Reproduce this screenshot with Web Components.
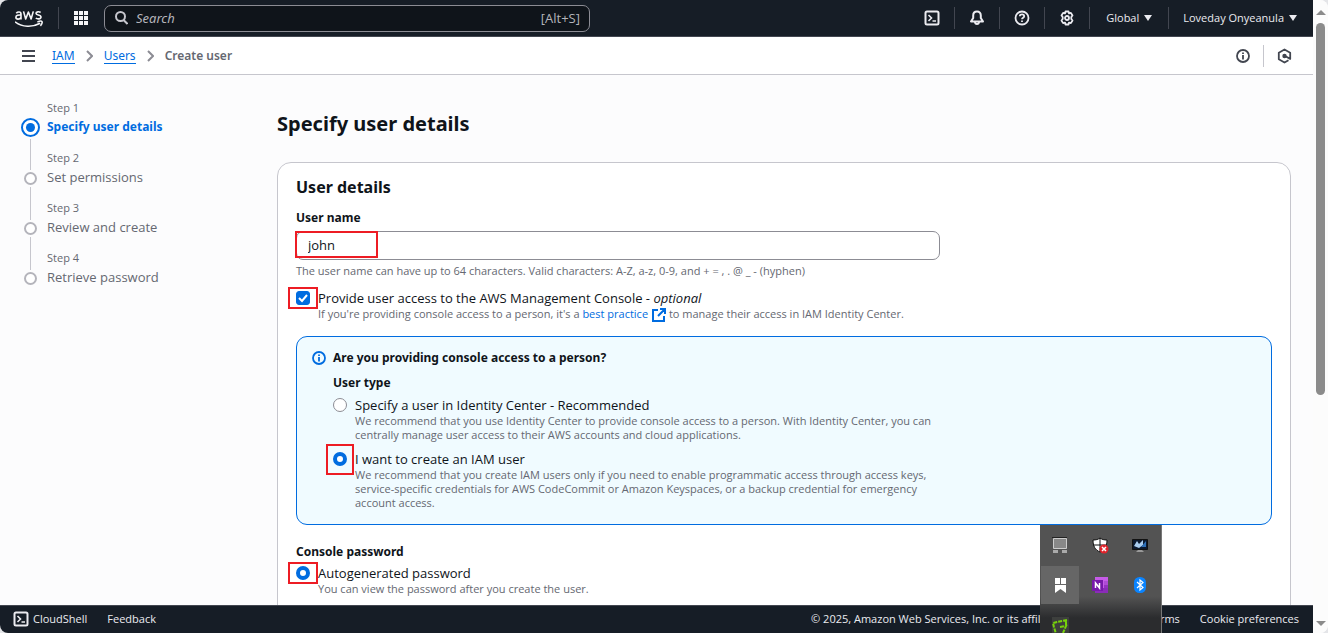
<!DOCTYPE html>
<html lang="en">
<head>
<meta charset="utf-8">
<title>Create user | IAM</title>
<meta name="viewport" content="width=device-width, initial-scale=1">
<style>
html, body { margin: 0; height: 100%; }
body {
  --dark: #161d26; --blue: #006ce0; --ink: #0f141a; --muted: #656871; --line: #c6c6cd;
  --s: 11px; --m: 12px; --b: 13px; --bold: "Noto Sans", sans-serif;
  background: #e4e5e8; color: var(--ink); overflow: hidden;
  font-family: "Open Sans", "Noto Sans", sans-serif; font-size: 13px; line-height: 18px;
}
</style>
</head>
<body>
<console-window>
  <top-bar slot="top"></top-bar>
  <crumb-bar slot="top"></crumb-bar>
  <step-nav slot="side">
    <step-item step="Step 1" active>Specify user details</step-item>
    <step-item step="Step 2">Set permissions</step-item>
    <step-item step="Step 3">Review and create</step-item>
    <step-item step="Step 4" last>Retrieve password</step-item>
  </step-nav>
  <user-form></user-form>
  <foot-bar slot="foot"></foot-bar>
  <tray-popup slot="over"></tray-popup>
</console-window>

<script>
const define = (name, html, init) => customElements.define(name, class extends HTMLElement {
  constructor() {
    super();
    const t = document.createElement('template');
    t.innerHTML = '<style>*,:host{box-sizing:border-box}svg{display:block;flex:none}' + html.replace('<style>', '');
    this.attachShadow({ mode: 'open' }).append(t.content.cloneNode(true));
  }
  connectedCallback() { if (init) init(this, this.shadowRoot); }
});
const terminal = '<svg width="16" height="16" viewBox="0 0 16 16" fill="none" stroke="currentColor" stroke-width="2"><rect x="1.5" y="1.5" width="13" height="13" rx="1.5"/><path d="M4.5 5l3 3-3 3M8.5 11h3.5" stroke-width="1.6"/></svg>';

define('console-window', `<style>
:host{display:flex;height:100vh;position:relative;overflow:hidden;border-radius:8px;background:#fcfcfc}
.app{flex:1;min-width:0;display:flex;flex-direction:column;background:#fcfcfd}
main{flex:1;min-height:0;overflow:hidden;display:grid;grid-template-columns:256px 1fr;padding:26px 22px 0 21px}
</style>
<div class="app"><slot name="top"></slot><main><slot name="side"></slot><slot></slot></main><slot name="foot"></slot></div>
<scroll-rail></scroll-rail><slot name="over"></slot>`);

define('scroll-rail', `<style>
:host{display:flex;flex-direction:column;align-items:center;width:15px;padding:10px 0 7px;gap:8px;background:#fcfcfc}
.track{flex:1;width:9px}
.thumb{height:63%;border-radius:5px;background:#8b8b8b}
</style>
<svg width="10" height="5"><path d="M5 0l5 5H0z" fill="#8b8b8b"/></svg>
<div class="track"><div class="thumb"></div></div>
<svg width="10" height="5"><path d="M0 0h10L5 5z" fill="#8b8b8b"/></svg>`);

define('top-bar', `<style>
:host{display:flex;align-items:center;height:37px;flex:none;background:var(--dark);border-bottom:1px solid #424650;color:#ebebf0;padding:0 16px 0 15px;font-size:11px}
.sep{width:1px;height:22px;background:#424650}
button{background:none;border:0;padding:0;color:inherit;font:inherit;display:flex;align-items:center;justify-content:center;gap:5px}
.grid{width:14px;margin:0 16px 0 15px}
.home{margin-right:15px;color:inherit}
.search{width:486px;height:27px;display:flex;align-items:center;gap:8px;padding:0 9px 0 10px;border:1px solid #8c8c94;border-radius:7px;background:#0f141a;color:#b4b4bb;font-size:13px}
input{flex:1;min-width:0;border:0;padding:0;background:none;outline:0;font:italic 13px "Noto Sans",sans-serif;color:inherit}
input::placeholder{color:#b4b4bb;opacity:1}
.tools{margin-left:auto;display:flex;align-items:center}
.icon{width:44px}
.global{width:78px}.user{margin-left:14px}
</style>
<a class="home" href="#" aria-label="AWS home"><svg width="28" height="19" viewBox="0 0 28 19" fill="none" stroke="#f5f5f7" stroke-width="1.6" stroke-linejoin="round">
<path d="M1.3 4.2C2.6 2.6 6 2.4 6 5v5.4M6 6.2C3.4 5.8.9 6.3.9 8.3c0 2.4 4 2.4 5.1 0M8.5 2.4l2.2 7.6L13.4 3l2.7 7 2.2-7.6M25.6 3.5c-1.3-1-4.6-1-4.6.8 0 2.2 5 1 5 3.7 0 2.4-3.8 2.3-5.2 1"/>
<path d="M0 12.8c7 5.6 17.500 5.800 25.200 1.500M22.400 12.900c2-.9 4.200-.9 4.600-.2.300.7-.2 2.600-1.600 4.200"/></svg></a>
<i class="sep"></i>
<button class="grid" aria-label="Services"><svg width="14" height="14" fill="#f5f5f7"><path d="M0 0h4v4H0zM5 0h4v4H5zM10 0h4v4h-4zM0 5h4v4H0zM5 5h4v4H5zM10 5h4v4h-4zM0 10h4v4H0zM5 10h4v4H5zM10 10h4v4h-4z"/></svg></button>
<label class="search"><svg width="13" height="14" viewBox="0 0 13 14" fill="none" stroke="#c6c6cd" stroke-width="2"><circle cx="5.500" cy="5.500" r="4.500"/><path d="M8.500 9l4 4"/></svg><input type="search" aria-label="Search" placeholder="Search"><span>[Alt+S]</span></label>
<div class="tools">
<button class="icon" aria-label="CloudShell">${terminal}</button><i class="sep"></i>
<button class="icon" aria-label="Notifications"><svg width="16" height="16" viewBox="0 0 16 16" fill="none" stroke="currentColor" stroke-width="2"><path d="M8 1.500C5.500 1.500 4.200 3.200 4.200 5.500V8L2 11.500h12L11.800 8V5.500C11.800 3.200 10.500 1.500 8 1.500z" stroke-linejoin="round"/><path d="M6 12c.2 2.600 3.800 2.600 4 0"/></svg></button><i class="sep"></i>
<button class="icon" aria-label="Help"><svg width="16" height="16" viewBox="0 0 16 16" fill="none" stroke="currentColor" stroke-width="1.800"><circle cx="8" cy="8" r="6.500"/><path d="M5.800 6.300c0-2.700 4.400-2.700 4.400 0 0 1.500-2.200 1.500-2.200 3M8 10.500v1.600"/></svg></button><i class="sep"></i>
<button class="icon" aria-label="Settings"><svg width="16" height="16" viewBox="0 0 16 16" fill="none" stroke="currentColor" stroke-width="1.800"><path d="M6.500 1.500h3l.5 1.900 1.900-.5 1.600 2.600L12.300 7v2l1.200 1.500-1.600 2.600-1.900-.5-.5 1.900h-3L6 12.600l-1.900.5-1.600-2.600L3.700 9V7L2.500 5.500l1.600-2.600 1.900.5z" stroke-linejoin="round"/><circle cx="8" cy="8" r="2"/></svg></button><i class="sep"></i>
<button class="global">Global<svg width="8" height="6"><path d="M0 0h8L4 6z" fill="#ebebf0"/></svg></button><i class="sep"></i>
<button class="user">Loveday Onyeanula<svg width="8" height="6"><path d="M0 0h8L4 6z" fill="#ebebf0"/></svg></button>
</div>`);

define('crumb-bar', `<style>
:host{display:flex;align-items:center;height:38px;flex:none;background:#fff;border-bottom:1px solid var(--line);padding:0 21px 0 22px;color:#424650;font-size:var(--m)}
nav{display:flex;align-items:center;gap:11px;margin-left:17px;font-family:var(--bold)}
a{color:var(--blue);text-decoration:none;border-bottom:1px solid var(--blue);line-height:15px}
b{color:#656871;font-weight:600}
button{background:none;border:0;padding:0;color:inherit;display:flex}
.right{margin-left:auto;display:flex;align-items:center;gap:13px}
.right i{width:1px;height:22px;background:var(--line)}
</style>
<button aria-label="Open navigation"><svg width="13" height="12" fill="currentColor"><path d="M0 0h13v2H0zM0 5h13v2H0zM0 10h13v2H0z"/></svg></button>
<nav aria-label="Breadcrumbs"><a href="#">IAM</a><svg width="7" height="12" fill="none" stroke="#8c8c94" stroke-width="2"><path d="M1 1l5 5-5 5"/></svg><a href="#">Users</a><svg width="7" height="12" fill="none" stroke="#8c8c94" stroke-width="2"><path d="M1 1l5 5-5 5"/></svg><b>Create user</b></nav>
<div class="right"><button aria-label="Information"><svg width="14" height="14" fill="none" stroke="currentColor" stroke-width="1.800"><circle cx="7" cy="7" r="6"/><path d="M7 6v4.500M7 3.500v1.600"/></svg></button><i></i>
<button aria-label="Assistant"><svg width="15" height="16" viewBox="0 0 15 16" fill="none" stroke="currentColor" stroke-width="1.800"><path d="M11.500 12.300L7.500 14.500 1.800 11.300V4.700L7.500 1.500l5.700 3.200v6.200L8 8" stroke-linejoin="round"/><circle cx="7.500" cy="8" r="1.300" fill="currentColor"/></svg></button></div>`);

define('step-nav', `<style>:host{display:block}ol{margin:0;padding:0;list-style:none}</style><ol><slot></slot></ol>`);

define('step-item', `<style>
:host{display:grid;grid-template-columns:19px 1fr;column-gap:7px;height:50px;color:var(--muted)}
.mark{display:flex;flex-direction:column;align-items:center;padding-top:21px}
.dot{width:13px;height:13px;border:2px solid #b4b4bb;border-radius:50%;background:#fff;flex:none}
.rail{width:1px;flex:1;background:var(--line);margin:2px 0 0}
:host(:not([last])) .rail{margin-bottom:-19px}
:host([last]) .rail{display:none}
small{display:block;font-size:var(--s);line-height:14px}
a{display:block;font-size:var(--b);line-height:24px;color:inherit;text-decoration:none}
:host([active]) .mark{padding-top:17px}
:host([active]) .dot{width:19px;height:19px;border-color:var(--blue);display:grid;place-items:center}
:host([active]) .dot::after{content:"";width:9px;height:9px;border-radius:50%;background:var(--blue)}
:host([active]) a{color:var(--blue);font-family:var(--bold);font-weight:700;font-size:var(--m)}
</style><div class="mark"><i class="dot"></i><i class="rail"></i></div><div><small></small><a href="#"><slot></slot></a></div>`,
(el, r) => r.querySelector('small').textContent = el.getAttribute('step'));

/* Red frame that calls attention to what it surrounds */
define('call-out', `<style>:host{position:absolute;border:2px solid #ed1c24;pointer-events:none}</style>`);

define('choice-item', `<style>
:host{display:block}
label{display:grid;grid-template-columns:14px 1fr;column-gap:8px;position:relative}
input{appearance:none;margin:2px 0 0;width:14px;height:14px;border:1px solid #8c8c94;background:#fff;border-radius:50%}
input[type=radio]:checked{border:4px solid var(--blue)}
input[type=checkbox]{border-radius:3px;background:var(--blue) center/10px 10px no-repeat url("data:image/svg+xml,%3Csvg xmlns='http://www.w3.org/2000/svg' viewBox='0 0 10 10'%3E%3Cpath d='M1 5l3 3 5-6' fill='none' stroke='white' stroke-width='2'/%3E%3C/svg%3E");border-color:var(--blue)}
.t{display:block;font-size:var(--b);line-height:18px}
.d{display:block;font-size:var(--s);line-height:14px;color:var(--muted)}
call-out{display:none;left:-8px;top:-2px;width:30px;height:22px}
:host([framed]) call-out{display:block}
:host([framed=large]) call-out{left:-7px;top:-6px;width:28px;height:31px}
</style><label><input><span><span class="t"><slot></slot></span><span class="d"><slot name="desc"></slot></span></span><call-out></call-out></label>`,
(el, r) => { const i = r.querySelector('input'); i.type = el.getAttribute('type'); i.checked = el.hasAttribute('checked'); });

define('info-alert', `<style>
:host{display:grid;grid-template-columns:14px 1fr;column-gap:7px;border:1px solid var(--blue);border-radius:11px;background:#f0fbff;padding:12px 15px 14px}
svg{margin-top:2px;color:var(--blue)}
</style><svg width="14" height="14" fill="none" stroke="currentColor" stroke-width="1.800"><circle cx="7" cy="7" r="6"/><path d="M7 6v4.500M7 3.500v1.600"/></svg><div><slot></slot></div>`);

define('user-form', `<style>
:host{display:block;padding-top:9px;min-width:0}
h1,h2,.lab{font-family:var(--bold)}
h1{margin:0 0 24px;font-size:20px;line-height:28px}
section{border:1px solid var(--line);border-radius:14px;background:#fff;padding:13px 18px 60px}
h2{margin:0 0 11px;font-size:16px;line-height:22px}
.lab{display:block;font-weight:700;font-size:var(--m);line-height:18px}
.field{position:relative;width:66%;margin:4px 0}
.field input{display:block;width:100%;height:29px;border:1px solid #8c8c94;border-radius:7px;padding:0 11px 2px;background:#fff;color:var(--ink);font:13px "Open Sans",sans-serif;outline:0}
.field call-out{left:-1px;top:0;width:83px;height:27px}
.hint{font-size:var(--s);line-height:14px;color:var(--muted);margin-bottom:11px}
a{color:var(--blue);text-decoration:none}
a svg{display:inline-block;vertical-align:-3px;margin:-1px 0 -1px 4px}
info-alert{margin:15px 0 18px}
info-alert choice-item{max-width:606px;margin-top:4px}
info-alert choice-item+choice-item{margin-top:8px}
.type{margin-top:7px}
.pw{margin-bottom:3px}
</style>
<h1>Specify user details</h1>
<section><h2>User details</h2>
<label class="lab" for="name">User name</label>
<div class="field"><input id="name" type="text" value="john"><call-out></call-out></div>
<div class="hint">The user name can have up to 64 characters. Valid characters: A-Z, a-z, 0-9, and + = , . @ _ - (hyphen)</div>
<choice-item type="checkbox" checked framed>Provide user access to the AWS Management Console - <i>optional</i><span slot="desc">If you're providing console access to a person, it's a <a href="#">best practice<svg width="14" height="14" fill="none" stroke="currentColor" stroke-width="2"><path d="M6 2H1v11h11V8M8 1h5v5M13 1L6 8"/></svg></a> to manage their access in IAM Identity Center.</span></choice-item>
<info-alert><b class="lab">Are you providing console access to a person?</b><b class="lab type">User type</b>
<choice-item type="radio">Specify a user in Identity Center - Recommended<span slot="desc">We recommend that you use Identity Center to provide console access to a person. With Identity Center, you can centrally manage user access to their AWS accounts and cloud applications.</span></choice-item>
<choice-item type="radio" checked framed="large">I want to create an IAM user<span slot="desc">We recommend that you create IAM users only if you need to enable programmatic access through access keys, service-specific credentials for AWS CodeCommit or Amazon Keyspaces, or a backup credential for emergency account access.</span></choice-item>
</info-alert>
<b class="lab pw">Console password</b>
<choice-item type="radio" checked framed>Autogenerated password<span slot="desc">You can view the password after you create the user.</span></choice-item>
</section>`);

define('foot-bar', `<style>
:host{display:flex;align-items:center;height:28px;flex:none;background:var(--dark);border-top:1px solid #424650;color:#ebebf0;padding:0 14px 2px 13px;font-size:11px;white-space:nowrap}
a,button{color:inherit;text-decoration:none;background:none;border:0;padding:0;font:inherit;display:flex;align-items:center;gap:4px}
a{margin-left:20px}.copy{margin-left:auto}
.terms{margin-left:80px}
</style><button>${terminal}CloudShell</button><a href="#">Feedback</a><span class="copy">© 2025, Amazon Web Services, Inc. or its affiliates.</span><a class="terms" href="#">Terms</a><a href="#">Cookie preferences</a>`);

/* Overflow panel of the desktop's notification area, lying over the page */
define('tray-popup', `<style>
:host{position:absolute;right:166px;bottom:0;width:122px;height:108px;display:grid;grid-template:repeat(3,40px)/repeat(3,40px);background:linear-gradient(#535353 0 66%,#2b2c2e 86%);overflow:hidden;border-right:1px solid #777}
div{display:grid;place-items:center}
.on{background:#666;margin:1px}
</style>
<div><svg width="16" height="17"><path d="M1.500 1.500h13v10h-13z" fill="#888" stroke="#ccc"/><path d="M0 0h15v1H0z" fill="#222"/><path d="M1 13h5v3H1zM10 13h5v3h-5z" fill="#aaa"/></svg></div>
<div><svg width="17" height="17"><path d="M8 1c2 1.500 4 2 7 2 0 6-2 10-7 12C3 13 1 9 1 3c3 0 5-.5 7-2z" fill="#fff" stroke="#111"/><path d="M8 1v14M1 8h13" stroke="#111"/><circle cx="12" cy="12" r="4.500" fill="#e0232b"/><path d="M10 10l4 4M14 10l-4 4" stroke="#fff" stroke-width="1.500"/></svg></div>
<div><svg width="16" height="15"><path d="M.5 1.500h15v10H.5z" fill="#0b1930" stroke="#111"/><path d="M2 8l3-5 2 3 4-4v5l-4 3z" fill="#a9cdf0"/><path d="M9 9l5-6v6z" fill="#2d6fb8"/><path d="M6 12h4l2 2H4z" fill="#999"/></svg></div>
<div class="on"><svg width="11" height="15"><path d="M0 0h5v6H0zM6 0h5v6H6zM0 7h11v8l-5.500-4L0 15z" fill="#fff"/></svg></div>
<div><svg width="16" height="16"><path d="M3 0h13v16H3z" fill="#c65be8"/><path d="M12 4h4v4h-4z" fill="#ae4bd5"/><path d="M12 8h4v4h-4z" fill="#9332bf"/><path d="M3 11h13v5H3z" fill="#8a2cb8"/><path d="M0 3h11v11H0z" fill="#7719aa"/><path d="M3.500 11V6l4 5V6" fill="none" stroke="#fff" stroke-width="1.500"/></svg></div>
<div><svg width="12" height="16"><rect width="12" height="16" rx="5.500" fill="#0a84ff"/><path d="M3 5l6 5.500-3 2.500V3l3 2.500L3 11" fill="none" stroke="#fff" stroke-width="1.200"/></svg></div>
<div><svg width="17" height="17"><path d="M0 0h17v17H0z" fill="#3d3f3d"/><path d="M15 3L5 5 1 6l1 4 2 7M14 4v4M8 10l6-1-3 7" fill="none" stroke="#76d20a" stroke-width="2" stroke-dasharray="4 1"/></svg></div>`);
</script>
</body>
</html>
